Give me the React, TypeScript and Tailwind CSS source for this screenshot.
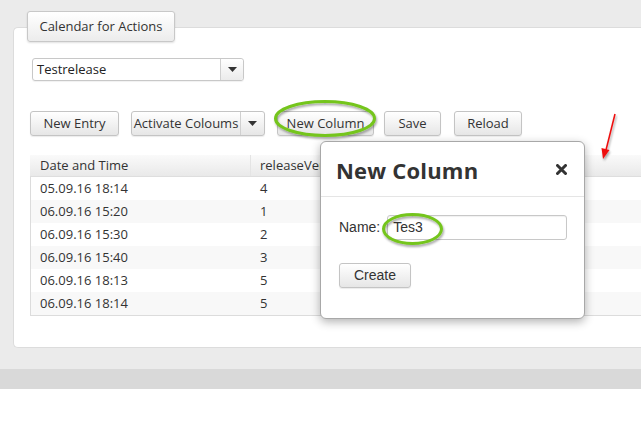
import React from "react";

const btn =
  "h-[25px] flex items-center justify-center border border-[#c4c4c4] rounded-[3px] bg-gradient-to-b from-[#ffffff] to-[#e6e6e6] shadow-[0_1px_1px_rgba(0,0,0,0.08)] text-[13px] text-[#333]";

const rows = [
  ["05.09.16 18:14", "4"],
  ["06.09.16 15:20", "1"],
  ["06.09.16 15:30", "2"],
  ["06.09.16 15:40", "3"],
  ["06.09.16 18:13", "5"],
  ["06.09.16 18:14", "5"],
];

function Caret() {
  return (
    <svg width="9" height="5" viewBox="0 0 9 5">
      <path d="M0 0 L9 0 L4.5 5 Z" fill="#333" />
    </svg>
  );
}

export default function App() {
  return (
    <div className="w-[641px] h-[429px] relative overflow-hidden bg-white font-['Open_Sans',sans-serif] text-[#333]">
      <div className="bg-[#ebebeb] pt-[11px] pl-[13px] pb-[21px]">
        <div className="relative z-10 ml-[14px] w-[148px] h-[31px] flex items-center justify-center border border-[#c8c8c8] rounded-[3px] bg-gradient-to-b from-[#ffffff] to-[#ececec] shadow-[0_1px_2px_rgba(0,0,0,0.12)] text-[13px]">
          Calendar for Actions
        </div>
        <div className="-mt-[15px] h-[321px] bg-white border border-r-0 border-[#dcdcdc] rounded-l-[5px] pt-[30px] pl-[16px]">
          <div className="ml-[2px] w-[212px] h-[23px] flex border border-[#c8c8c8] rounded-[3px] shadow-[0_1px_1px_rgba(0,0,0,0.06)]">
            <div className="flex-1 flex items-center pl-[4px] text-[13px] text-[#222]">Testrelease</div>
            <div className="w-[23px] flex items-center justify-center border-l border-[#d0d0d0] bg-gradient-to-b from-[#ffffff] to-[#ebebeb] rounded-r-[3px]">
              <Caret />
            </div>
          </div>

          <div className="mt-[30px] flex items-center">
            <div className={`${btn} w-[89px]`}>New Entry</div>
            <div className="ml-[12px] h-[25px] w-[134px] flex border border-[#c4c4c4] rounded-[3px] bg-gradient-to-b from-[#ffffff] to-[#e6e6e6] shadow-[0_1px_1px_rgba(0,0,0,0.08)] text-[13px]">
              <div className="flex-1 flex items-center justify-center">Activate Coloums</div>
              <div className="w-[24px] flex items-center justify-center border-l border-[#d0d0d0]">
                <Caret />
              </div>
            </div>
            <div className={`${btn} ml-[12px] w-[97px]`}>New Column</div>
            <div className={`${btn} ml-[10px] w-[57px]`}>Save</div>
            <div className={`${btn} ml-[13px] w-[68px]`}>Reload</div>
          </div>

          <div className="mt-[19px] border-l border-b border-[#dcdcdc] text-[13px]">
            <div className="h-[22px] flex bg-gradient-to-b from-[#fafafa] to-[#e9e9e9] border-b border-[#dedede] -ml-px">
              <div className="w-[221px] pl-[10px] flex items-center border-r border-[#e4e4e4]">Date and Time</div>
              <div className="flex-1 pl-[9px] flex items-center">
                <span className="w-[60px] overflow-hidden whitespace-nowrap">releaseVersion</span>
              </div>
            </div>
            {rows.map((r, i) => (
              <div key={i} className={`h-[23px] flex ${i % 2 === 1 ? "bg-[#f8f8f8]" : "bg-white"}`}>
                <div className="w-[220px] pl-[9px] flex items-center">{r[0]}</div>
                <div className="flex-1 pl-[9px] flex items-center">{r[1]}</div>
              </div>
            ))}
          </div>
        </div>
      </div>
      <div className="h-[20px] bg-[#d9d9d9]" />

      {/* Dialog */}
      <div className="absolute left-[320px] top-[141px] w-[265px] h-[178px] bg-white border border-[#a8a8a8] rounded-[6px] shadow-[0_3px_10px_rgba(0,0,0,0.3)]">
        <div className="h-[55px] flex items-center justify-between pl-[15px] pr-[17px] border-b border-[#e5e5e5]">
          <div className="pt-[3px] text-[22px] font-bold text-[#333] tracking-[0.2px]">New Column</div>
          <svg width="11" height="11" viewBox="0 0 11 11">
            <path d="M1.5 1.5 L9.5 9.5 M9.5 1.5 L1.5 9.5" stroke="#333" strokeWidth="3" strokeLinecap="round" />
          </svg>
        </div>
        <div className="pl-[18px] pt-[18px] font-['Liberation_Sans',Arial,sans-serif] text-[14px] text-[#333]">
          <div className="flex items-center">
            <span>Name:</span>
            <div className="ml-[7px] w-[180px] h-[25px] border border-[#c8c8c8] rounded-[3px] flex items-center pl-[5px] shadow-[inset_0_1px_1px_rgba(0,0,0,0.06)]">
              Tes3
            </div>
          </div>
          <div className="mt-[23px] w-[72px] h-[25px] flex items-center justify-center border border-[#c4c4c4] rounded-[3px] bg-gradient-to-b from-[#ffffff] to-[#e6e6e6] shadow-[0_1px_1px_rgba(0,0,0,0.08)]">
            Create
          </div>
        </div>
      </div>

      {/* Annotations */}
      <svg className="absolute left-0 top-0 pointer-events-none" width="641" height="429" viewBox="0 0 641 429">
        <defs>
          <filter id="sh" x="-20%" y="-20%" width="140%" height="140%">
            <feDropShadow dx="1" dy="2" stdDeviation="1.2" floodColor="#000" floodOpacity="0.35" />
          </filter>
        </defs>
        <ellipse cx="325" cy="118.5" rx="49.5" ry="17" fill="none" stroke="#74c51f" strokeWidth="3" filter="url(#sh)" />
        <ellipse cx="412.5" cy="229" rx="29" ry="14.5" fill="none" stroke="#74c51f" strokeWidth="3" filter="url(#sh)" />
        <g filter="url(#sh)">
          <line x1="615" y1="114" x2="606" y2="150" stroke="#ee1111" strokeWidth="1.6" />
          <path d="M603 159 L601.5 148 L609.5 150 Z" fill="#ee1111" />
        </g>
      </svg>
    </div>
  );
}
